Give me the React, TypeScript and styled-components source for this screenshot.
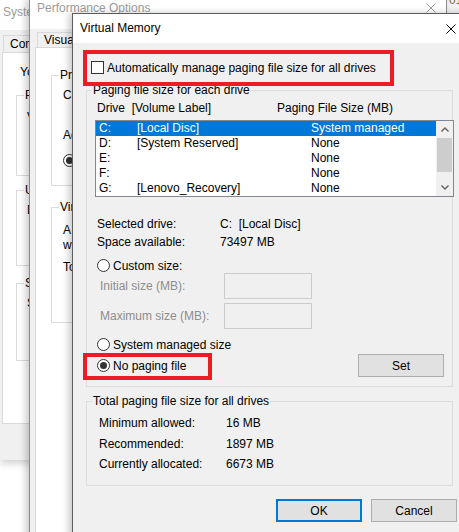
import React from "react";
import styled, { createGlobalStyle } from "styled-components";

const FONT = `"Liberation Sans", Arial, sans-serif`;

const GlobalStyle = createGlobalStyle`
  * { box-sizing: border-box; }
  html, body { margin: 0; padding: 0; background: #ffffff; }
  body { font-family: ${FONT}; font-size: 12px; color: #000000; }
`;

const Desktop = styled.div`
  position: relative;
  width: 459px;
  height: 532px;
  overflow: hidden;
  background: #ffffff;
`;

type Frame = "plain" | "inactive" | "active";

const Window = styled.div<{ $x: number; $y: number; $w: number; $h: number; $frame: Frame; $z: number; $bg?: string }>`
  position: absolute;
  left: ${(p) => p.$x}px;
  top: ${(p) => p.$y}px;
  width: ${(p) => p.$w}px;
  height: ${(p) => p.$h}px;
  z-index: ${(p) => p.$z};
  display: flex;
  flex-direction: column;
  background: ${(p) => p.$bg ?? "#f0f0f0"};
  border: ${(p) =>
    p.$frame === "active" ? "1px solid #5c5c5c" : p.$frame === "inactive" ? "1px solid #8c8c8c" : "none"};
  box-shadow: ${(p) =>
    p.$frame === "plain" ? "0 3px 8px rgba(0,0,0,0.2)" : "-3px 0 7px rgba(0,0,0,0.22)"};
`;

const TitleBar = styled.div<{ $h: number; $pl: number }>`
  flex: none;
  height: ${(p) => p.$h}px;
  background: #ffffff;
  display: flex;
  align-items: flex-start;
  justify-content: space-between;
  padding-left: ${(p) => p.$pl}px;
`;

const TitleText = styled.span<{ $lh: number; $dim?: boolean }>`
  line-height: ${(p) => p.$lh}px;
  color: ${(p) => (p.$dim ? "#9b9b9b" : "#000000")};
  white-space: nowrap;
`;

const CloseBox = styled.span<{ $w: number; $h: number }>`
  flex: none;
  width: ${(p) => p.$w}px;
  height: ${(p) => p.$h}px;
  display: flex;
  align-items: center;
  justify-content: center;
`;

const TabArea = styled.div<{ $pt: number; $pl: number }>`
  flex: 1;
  display: flex;
  flex-direction: column;
  padding: ${(p) => p.$pt}px 0 0 ${(p) => p.$pl}px;
  min-height: 0;
`;

const TabStrip = styled.div`
  display: flex;
  flex: none;
`;

const Tab = styled.div<{ $h: number; $ml: number }>`
  height: ${(p) => p.$h}px;
  margin-left: ${(p) => p.$ml}px;
  padding: 0 6px;
  line-height: ${(p) => p.$h - 1}px;
  border: 1px solid #d9d9d9;
  border-bottom: none;
  background: #f0f0f0;
  white-space: nowrap;
`;

const TabPanel = styled.div<{ $h?: number; $pt: number; $pl: number }>`
  ${(p) => (p.$h ? `height: ${p.$h}px; flex: none;` : "flex: 1;")}
  background: #ffffff;
  border: 1px solid #d9d9d9;
  padding: ${(p) => p.$pt}px 0 0 ${(p) => p.$pl}px;
  display: flex;
  flex-direction: column;
  align-items: flex-start;
`;

const Line = styled.div<{ $ml?: number; $mt?: number }>`
  margin-left: ${(p) => p.$ml ?? 0}px;
  margin-top: ${(p) => p.$mt ?? 0}px;
  line-height: 15px;
  white-space: nowrap;
`;

const GroupBox = styled.div<{ $mt?: number; $h?: number; $w?: number; $pad: string }>`
  position: relative;
  flex: none;
  margin-top: ${(p) => p.$mt ?? 0}px;
  ${(p) => (p.$h ? `height: ${p.$h}px;` : "")}
  ${(p) => (p.$w ? `width: ${p.$w}px;` : "align-self: stretch;")}
  padding: ${(p) => p.$pad};
  border: 1px solid #dcdcdc;
  display: flex;
  flex-direction: column;
  align-items: flex-start;
`;

const GroupLabel = styled.span<{ $left: number; $bg: string }>`
  position: absolute;
  top: -8px;
  left: ${(p) => p.$left}px;
  padding: 0 1px;
  line-height: 15px;
  background: ${(p) => p.$bg};
  white-space: nowrap;
`;

const RadioCircle = styled.span<{ $checked?: boolean }>`
  flex: none;
  width: 13px;
  height: 13px;
  border-radius: 50%;
  border: 1px solid #333333;
  background: #ffffff;
  display: inline-flex;
  align-items: center;
  justify-content: center;
  &::after {
    content: "";
    width: 7px;
    height: 7px;
    border-radius: 50%;
    background: ${(p) => (p.$checked ? "#333333" : "transparent")};
  }
`;

const RadioRow = styled.div<{ $mt?: number; $h?: number; $pl?: number }>`
  display: flex;
  align-items: center;
  gap: 3px;
  height: ${(p) => p.$h ?? 15}px;
  margin-top: ${(p) => p.$mt ?? 0}px;
  padding-left: ${(p) => p.$pl ?? 0}px;
  white-space: nowrap;
`;

/* ---------- Virtual Memory dialog parts ---------- */

const DialogBody = styled.div`
  flex: 1;
  display: flex;
  flex-direction: column;
  padding: 17px 20px 0 13px;
`;

const CheckRow = styled.div`
  display: flex;
  align-items: center;
  gap: 3px;
  height: 15px;
  padding-left: 5px;
  white-space: nowrap;
`;

const CheckBox = styled.span`
  flex: none;
  width: 13px;
  height: 13px;
  border: 1px solid #333333;
  background: #ffffff;
`;

const ListHeader = styled.div`
  display: flex;
  height: 15px;
  line-height: 15px;
  padding-left: 2px;
  white-space: pre;
`;

const HeaderCell = styled.span<{ $w?: number }>`
  ${(p) => (p.$w ? `width: ${p.$w}px;` : "")}
  flex: none;
`;

const ListBox = styled.div`
  display: flex;
  width: 359px;
  height: 77px;
  margin-top: 4px;
  border: 1px solid #828790;
  background: #ffffff;
`;

const ListRows = styled.div`
  flex: 1;
  display: flex;
  flex-direction: column;
`;

const ListRow = styled.div<{ $sel?: boolean }>`
  display: grid;
  grid-template-columns: 38px 174px 1fr;
  height: 15px;
  line-height: 15px;
  padding-left: 3px;
  white-space: nowrap;
  background: ${(p) => (p.$sel ? "#0078d7" : "transparent")};
  color: ${(p) => (p.$sel ? "#ffffff" : "#000000")};
`;

const ScrollBar = styled.div`
  flex: none;
  width: 17px;
  display: flex;
  flex-direction: column;
  background: #f0f0f0;
`;

const ScrollArrow = styled.div`
  flex: none;
  height: 17px;
  display: flex;
  align-items: center;
  justify-content: center;
`;

const ScrollThumb = styled.div`
  flex: none;
  height: 34px;
  margin: 0 1px;
  background: #cdcdcd;
`;

const ScrollTrack = styled.div`
  flex: 1;
`;

const InfoGrid = styled.div<{ $mt: number; $pl: number; $col: number; $lh: number }>`
  display: grid;
  grid-template-columns: ${(p) => p.$col}px auto;
  margin-top: ${(p) => p.$mt}px;
  padding-left: ${(p) => p.$pl}px;
  line-height: ${(p) => p.$lh}px;
  white-space: pre;
`;

const SizeRow = styled.div<{ $mt: number }>`
  display: flex;
  align-items: center;
  height: 26px;
  margin-top: ${(p) => p.$mt}px;
  padding-left: 5px;
`;

const SizeLabel = styled.span`
  width: 124px;
  color: #8d8d8d;
  white-space: nowrap;
`;

const SizeInput = styled.div`
  width: 88px;
  height: 26px;
  border: 1px solid #cccccc;
  background: #f0f0f0;
`;

const ActionRow = styled.div`
  align-self: stretch;
  display: flex;
  align-items: center;
  justify-content: space-between;
  height: 23px;
  margin-top: 2px;
  padding-left: 2px;
`;

const PushButton = styled.div<{ $default?: boolean }>`
  flex: none;
  width: 86px;
  height: 23px;
  display: flex;
  align-items: center;
  justify-content: center;
  background: #e1e1e1;
  border: ${(p) => (p.$default ? "2px solid #0078d7" : "1px solid #adadad")};
`;

const ButtonRow = styled.div`
  display: flex;
  justify-content: flex-end;
  gap: 9px;
  margin-top: 13px;
  margin-right: -4px;
`;

const Highlight = styled.div<{ $x: number; $y: number; $w: number; $h: number }>`
  position: absolute;
  left: ${(p) => p.$x}px;
  top: ${(p) => p.$y}px;
  width: ${(p) => p.$w}px;
  height: ${(p) => p.$h}px;
  border: 4px solid #ed1c24;
  pointer-events: none;
`;

const CornerText = styled.span`
  line-height: 16px;
  padding-left: 2px;
  color: #8a6a1a;
`;

const CloseX = ({ color }: { color: string }) => (
  <svg width="10" height="10" viewBox="0 0 10 10">
    <path d="M0.5 0.5 L9.5 9.5 M9.5 0.5 L0.5 9.5" stroke={color} strokeWidth="1" fill="none" />
  </svg>
);

const Chevron = ({ up }: { up?: boolean }) => (
  <svg width="8" height="5" viewBox="0 0 8 5">
    <path
      d={up ? "M0.5 4.5 L4 1 L7.5 4.5" : "M0.5 0.5 L4 4 L7.5 0.5"}
      stroke="#606060"
      strokeWidth="1.4"
      fill="none"
    />
  </svg>
);

const drives = [
  { d: "C:", label: "[Local Disc]", size: "System managed", sel: true },
  { d: "D:", label: "[System Reserved]", size: "None" },
  { d: "E:", label: "", size: "None" },
  { d: "F:", label: "", size: "None" },
  { d: "G:", label: "[Lenovo_Recovery]", size: "None" },
];

export default function App() {
  return (
    <>
      <GlobalStyle />
      <Desktop>
        {/* System Properties (background) */}
        <Window $x={0} $y={0} $w={200} $h={460} $frame="plain" $z={1}>
          <TitleBar $h={30} $pl={3}>
            <TitleText $lh={24} $dim>
              System Properties
            </TitleText>
          </TitleBar>
          <TabArea $pt={5} $pl={2}>
            <TabStrip>
              <Tab $h={17} $ml={1}>
                Computer Name
              </Tab>
            </TabStrip>
            <TabPanel $h={372} $pt={12} $pl={13}>
              <Line $ml={4}>You must be logged on as an Administrator to make most of these changes.</Line>
              <GroupBox $mt={15} $h={81} $w={170} $pad="14px 0 0 10px">
                <GroupLabel $left={7} $bg="#ffffff">
                  Performance
                </GroupLabel>
                <Line>Visual effects, processor scheduling, memory usage and virtual memory</Line>
              </GroupBox>
              <GroupBox $mt={14} $h={76} $w={170} $pad="12px 0 0 10px">
                <GroupLabel $left={7} $bg="#ffffff">
                  User Profiles
                </GroupLabel>
                <Line>Desktop settings related to your sign-in</Line>
              </GroupBox>
              <GroupBox $mt={17} $h={78} $w={170} $pad="12px 0 0 10px">
                <GroupLabel $left={7} $bg="#ffffff">
                  Startup and Recovery
                </GroupLabel>
                <Line>System startup, system failure and debugging information</Line>
              </GroupBox>
            </TabPanel>
          </TabArea>
        </Window>

        {/* window peeking at top right */}
        <Window $x={447} $y={-8} $w={40} $h={22} $frame="plain" $z={1} $bg="#f3f3f3">
          <CornerText>01</CornerText>
        </Window>

        {/* Performance Options (background) */}
        <Window $x={29} $y={-1} $w={418} $h={560} $frame="inactive" $z={2}>
          <TitleBar $h={29} $pl={7}>
            <TitleText $lh={16} $dim>
              Performance Options
            </TitleText>
            <CloseBox $w={30} $h={15}>
              <CloseX color="#9b9b9b" />
            </CloseBox>
          </TitleBar>
          <TabArea $pt={3} $pl={5}>
            <TabStrip>
              <Tab $h={15} $ml={2}>
                Visual Effects
              </Tab>
            </TabStrip>
            <TabPanel $pt={27} $pl={15}>
              <GroupBox $h={111} $w={360} $pad="12px 0 0 11px">
                <GroupLabel $left={7} $bg="#ffffff">
                  Processor scheduling
                </GroupLabel>
                <Line>Choose how to allocate processor resources.</Line>
                <Line $mt={25}>Adjust for best performance of:</Line>
                <RadioRow $mt={10}>
                  <RadioCircle $checked />
                  Programs
                </RadioRow>
              </GroupBox>
              <GroupBox $mt={21} $h={116} $w={360} $pad="15px 0 0 11px">
                <GroupLabel $left={7} $bg="#ffffff">
                  Virtual memory
                </GroupLabel>
                <Line>A paging file is an area on the hard disk that</Line>
                <Line>windows uses as if it were RAM.</Line>
                <Line $mt={7}>Total paging file size for all drives: 6673 MB</Line>
              </GroupBox>
            </TabPanel>
          </TabArea>
        </Window>

        {/* Virtual Memory (active) */}
        <Window $x={72} $y={13} $w={402} $h={530} $frame="active" $z={3}>
          <TitleBar $h={29} $pl={7}>
            <TitleText $lh={29}>Virtual Memory</TitleText>
            <CloseBox $w={44} $h={29}>
              <CloseX color="#000000" />
            </CloseBox>
          </TitleBar>
          <DialogBody>
            <CheckRow>
              <CheckBox />
              Automatically manage paging file size for all drives
            </CheckRow>

            <GroupBox $mt={15} $pad="10px 8px 9px 8px">
              <GroupLabel $left={5} $bg="#f0f0f0">
                Paging file size for each drive
              </GroupLabel>
              <ListHeader>
                <HeaderCell $w={180}>Drive  [Volume Label]</HeaderCell>
                <HeaderCell>Paging File Size (MB)</HeaderCell>
              </ListHeader>
              <ListBox>
                <ListRows>
                  {drives.map((r) => (
                    <ListRow key={r.d} $sel={r.sel}>
                      <span>{r.d}</span>
                      <span>{r.label}</span>
                      <span>{r.size}</span>
                    </ListRow>
                  ))}
                </ListRows>
                <ScrollBar>
                  <ScrollArrow>
                    <Chevron up />
                  </ScrollArrow>
                  <ScrollThumb />
                  <ScrollTrack />
                  <ScrollArrow>
                    <Chevron />
                  </ScrollArrow>
                </ScrollBar>
              </ListBox>

              <InfoGrid $mt={18} $pl={2} $col={123} $lh={18}>
                <span>Selected drive:</span>
                <span>C:  [Local Disc]</span>
                <span>Space available:</span>
                <span>73497 MB</span>
              </InfoGrid>

              <RadioRow $mt={7} $pl={2}>
                <RadioCircle />
                Custom size:
              </RadioRow>
              <SizeRow $mt={0}>
                <SizeLabel>Initial size (MB):</SizeLabel>
                <SizeInput />
              </SizeRow>
              <SizeRow $mt={4}>
                <SizeLabel>Maximum size (MB):</SizeLabel>
                <SizeInput />
              </SizeRow>
              <RadioRow $mt={8} $pl={2}>
                <RadioCircle />
                System managed size
              </RadioRow>
              <ActionRow>
                <RadioRow>
                  <RadioCircle $checked />
                  No paging file
                </RadioRow>
                <PushButton>Set</PushButton>
              </ActionRow>
            </GroupBox>

            <GroupBox $mt={14} $pad="11px 8px 10.5px 12px">
              <GroupLabel $left={5} $bg="#f0f0f0">
                Total paging file size for all drives
              </GroupLabel>
              <InfoGrid $mt={0} $pl={0} $col={127} $lh={20.5}>
                <span>Minimum allowed:</span>
                <span>16 MB</span>
                <span>Recommended:</span>
                <span>1897 MB</span>
                <span>Currently allocated:</span>
                <span>6673 MB</span>
              </InfoGrid>
            </GroupBox>

            <ButtonRow>
              <PushButton $default>OK</PushButton>
              <PushButton>Cancel</PushButton>
            </ButtonRow>
          </DialogBody>
          <Highlight $x={10} $y={36} $w={311} $h={36} />
          <Highlight $x={10} $y={339} $w={129} $h={27} />
        </Window>
      </Desktop>
    </>
  );
}
